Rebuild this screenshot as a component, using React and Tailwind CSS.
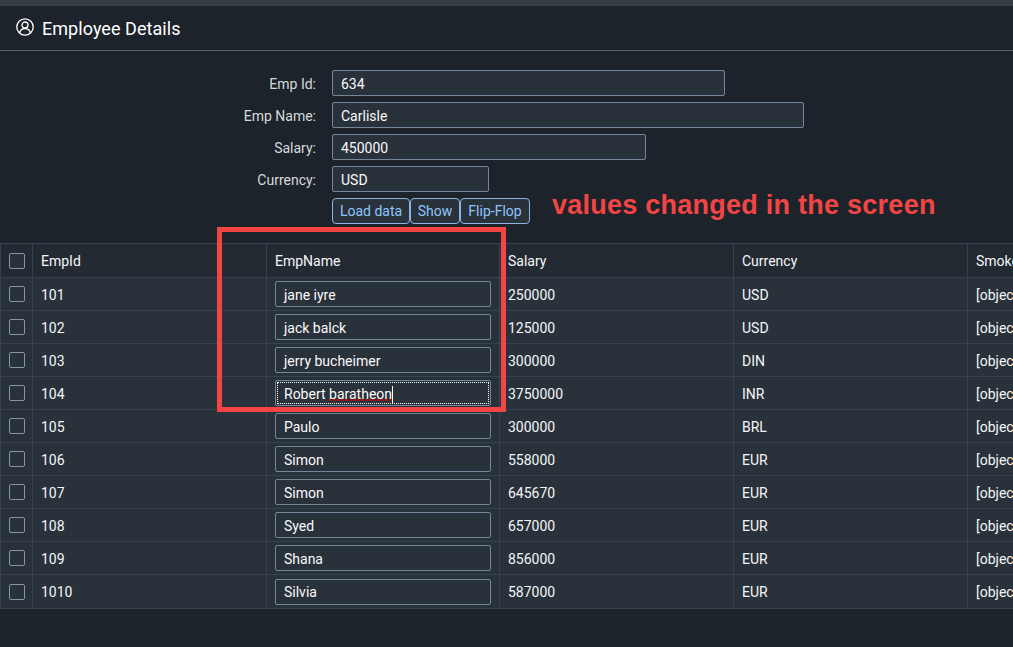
const rows = [
  ["101", "jane iyre", "250000", "USD"],
  ["102", "jack balck", "125000", "USD"],
  ["103", "jerry bucheimer", "300000", "DIN"],
  ["104", "Robert baratheon", "3750000", "INR"],
  ["105", "Paulo", "300000", "BRL"],
  ["106", "Simon", "558000", "EUR"],
  ["107", "Simon", "645670", "EUR"],
  ["108", "Syed", "657000", "EUR"],
  ["109", "Shana", "856000", "EUR"],
  ["1010", "Silvia", "587000", "EUR"],
];
const fields = [
  ["Emp Id:", "634", "w-[393px]"],
  ["Emp Name:", "Carlisle", "w-[472px]"],
  ["Salary:", "450000", "w-[314px]"],
  ["Currency:", "USD", "w-[157px]"],
];

function Check() {
  return <div className="w-4 h-4 rounded-[2px] border border-[#8696a9] bg-[#29313a]" />;
}

function Cell({ className = "", children }) {
  return <div className={"shrink-0 h-full flex items-center pl-2 pr-2 border-r border-[#354250] " + className}>{children}</div>;
}

function Btn({ className = "", children }) {
  return <button className={"h-[26px] rounded-[4px] border border-[#8ab6e0] bg-[#29313a] text-[#8fc5fb] text-[14px] leading-none " + className}>{children}</button>;
}

export default function App() {
  return (
    <div className="relative w-[1013px] h-[647px] overflow-hidden bg-[#1d232a] text-[#f5f6f7] text-[14px] font-['Roboto','Noto_Sans',sans-serif]">
      <div className="h-[6px] bg-[#363d40]" />
      <header className="h-[45px] flex items-center gap-2 pl-4 border-b border-[#54636f]">
        <svg width="18" height="18" viewBox="0 0 18 18" fill="none" stroke="#ffffff" strokeWidth="1.3" className="mb-[3px]">
          <circle cx="9" cy="9" r="8.2" />
          <circle cx="9" cy="7" r="3" />
          <path d="M3.6 15c.5-2.8 2.600-4.400 5.400-4.400s4.900 1.600 5.400 4.400" />
        </svg>
        <h1 className="text-[18px] tracking-[0.05px] leading-none text-white mt-[1px]">Employee Details</h1>
      </header>

      <section className="pt-[19px] flex flex-col gap-[6px] pl-[332px]">
        {fields.map(([label, value, w]) => (
          <div key={label} className="relative flex items-center h-[26px]">
            <span className="absolute right-[calc(100%+16px)] pt-[2px] whitespace-nowrap text-[#d5dadd]">{label}</span>
            <div className={w + " h-[26px] flex items-center px-2 pt-[2px] rounded-[2px] border border-[#74879a] bg-[#29313a] text-[#fafafa]"}>{value}</div>
          </div>
        ))}
        <div className="flex h-[26px]">
          <Btn className="w-[78px]">Load data</Btn>
          <Btn className="w-[50px]">Show</Btn>
          <Btn className="w-[70px]">Flip-Flop</Btn>
        </div>
      </section>

      <section className="mt-[19px] w-[1013px] overflow-hidden border-t border-b border-[#354250] border-l">
        <div className="flex h-[34px] bg-[#232a32] border-b border-[#354250] w-[1300px]">
          <div className="w-[32px] shrink-0 h-full flex items-center justify-center border-r border-[#354250]"><Check /></div>
          <Cell className="w-[234px] pt-[2px]">EmpId</Cell>
          <Cell className="w-[233px] pt-[2px]">EmpName</Cell>
          <Cell className="w-[234px] pt-[2px]">Salary</Cell>
          <Cell className="w-[234px] pt-[2px]">Currency</Cell>
          <Cell className="w-[233px] pt-[2px]">Smoker</Cell>
        </div>
        {rows.map((r, i) => (
          <div key={r[0]} className={"flex h-[33px] bg-[#29313a] w-[1300px] " + (i < 9 ? "border-b border-[#354250]" : "")}>
            <div className="w-[32px] shrink-0 h-full flex items-center justify-center border-r border-[#354250]"><Check /></div>
            <Cell className="w-[234px] pt-[2px]">{r[0]}</Cell>
            <Cell className="w-[233px]">
              <div className="relative w-full h-[26px] flex items-center px-2 pt-[2px] rounded-[2px] border border-[#74879a] bg-[#29313a] text-[#fafafa]">
                {i === 3 ? (
                  <>
                    <div className="absolute inset-[1px] border border-dotted border-white" />
                    <span>Robert <span className="underline decoration-dotted decoration-[#e00000] decoration-2">baratheon</span></span>
                    <span className="w-px h-[17px] bg-white" />
                  </>
                ) : r[1]}
              </div>
            </Cell>
            <Cell className="w-[234px] pt-[2px]">{r[2]}</Cell>
            <Cell className="w-[234px] pt-[2px]">{r[3]}</Cell>
            <Cell className="w-[233px] pt-[2px]">[object Object]</Cell>
          </div>
        ))}
      </section>

      <div className="absolute left-[217px] top-[227px] w-[289px] h-[185px] border-[5px] border-[#f44545]" />
      <div className="absolute left-[552px] top-[188px] text-[#f44545] text-[27px] leading-[34px] tracking-[0.25px] font-bold font-['Liberation_Sans',sans-serif] whitespace-nowrap">values changed in the screen</div>
    </div>
  );
}
